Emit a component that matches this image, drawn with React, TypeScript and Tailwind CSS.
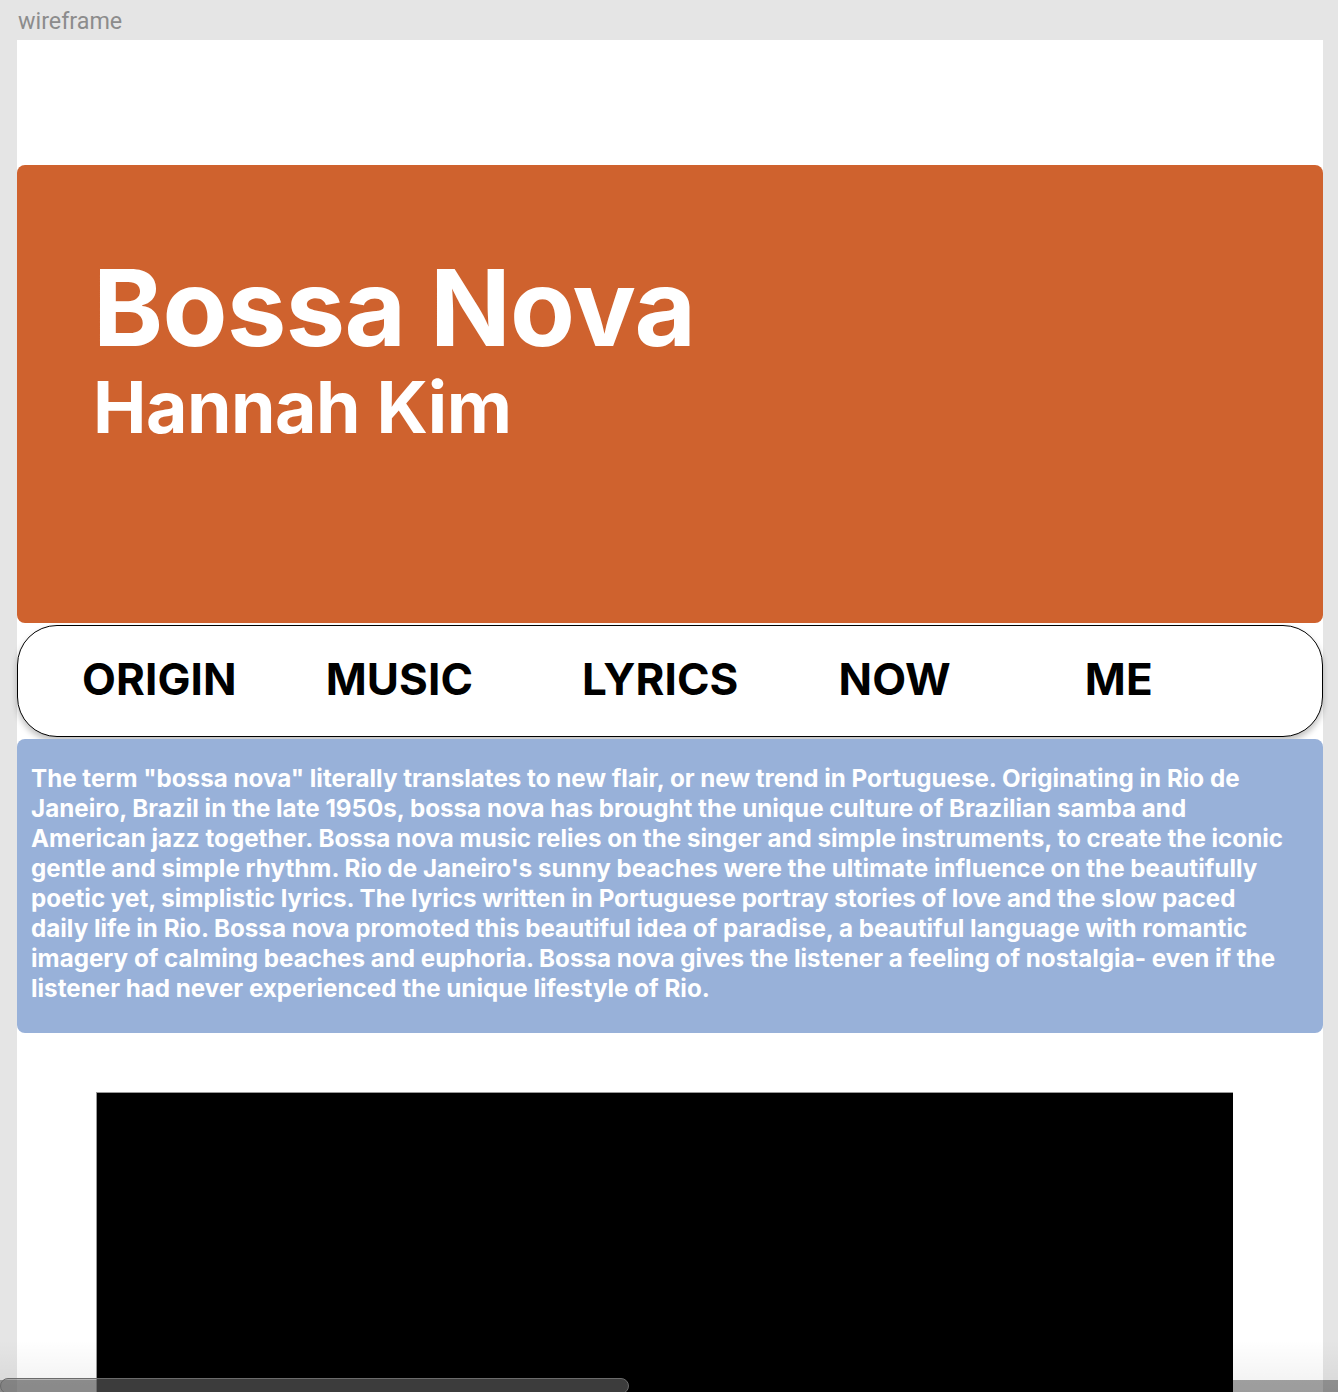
const NAV_ITEMS = [
  { label: "ORIGIN", cls: "ml-[64px]" },
  { label: "MUSIC", cls: "ml-[89px]" },
  { label: "LYRICS", cls: "ml-[109px]" },
  { label: "NOW", cls: "ml-[100px]" },
  { label: "ME", cls: "ml-[134px]" },
];

const ABOUT_LINES = [
  'The term "bossa nova" literally translates to new flair, or new trend in Portuguese. Originating in Rio de',
  "Janeiro, Brazil in the late 1950s, bossa nova has brought the unique culture of Brazilian samba and",
  "American jazz together. Bossa nova music relies on the singer and simple instruments, to create the iconic",
  "gentle and simple rhythm. Rio de Janeiro's sunny beaches were the ultimate influence on the beautifully",
  "poetic yet, simplistic lyrics. The lyrics written in Portuguese portray stories of love and the slow paced",
  "daily life in Rio. Bossa nova promoted this beautiful idea of paradise, a beautiful language with romantic",
  "imagery of calming beaches and euphoria. Bossa nova gives the listener a feeling of nostalgia- even if the",
  "listener had never experienced the unique lifestyle of Rio.",
];

export default function App() {
  return (
    <div className="min-h-screen bg-[#e5e5e5] font-['Inter',sans-serif] relative overflow-hidden">
      {/* Frame label */}
      <div className="pl-[18px] pt-[6px] h-[40px] text-[23.3px] leading-[30px] text-[#8c8c8c] font-['Roboto',sans-serif]">
        wireframe
      </div>

      {/* Frame */}
      <div className="ml-[17px] w-[1306px] bg-white pt-[125px] pb-[40px]">
        {/* Hero */}
        <header className="h-[458px] bg-[#cf622e] rounded-[8px] pl-[76px] pt-[88px] text-white">
          <h1 className="text-[106px] leading-[110px] font-bold tracking-[-0.6px]">Bossa Nova</h1>
          <h2 className="text-[71.5px] leading-[80px] font-bold mt-[4px] tracking-[-0.5px]">Hannah Kim</h2>
        </header>

        {/* Nav */}
        <nav className="mt-[2px] h-[112px] pb-[4px] border border-black rounded-[40px] shadow-[0_4px_6px_rgba(0,0,0,0.25)] flex items-center bg-white">
          {NAV_ITEMS.map((item) => (
            <a
              key={item.label}
              href="#"
              className={`${item.cls} text-[44px] font-bold text-black leading-none tracking-[0.1px]`}
            >
              {item.label}
            </a>
          ))}
        </nav>

        {/* About */}
        <section className="mt-[2px] bg-[#98b1d9] rounded-[8px] px-[14px] pt-[25px] pb-[29px]">
          <p className="text-white text-[24.2px] leading-[30px] font-bold whitespace-nowrap">
            {ABOUT_LINES.map((line) => (
              <span key={line} className="block">
                {line}
              </span>
            ))}
          </p>
        </section>

        {/* Video */}
        <div className="mt-[59px] ml-[79px] w-[1137px] h-[420px] bg-black border-t border-l border-[#9a9a9a]" />
      </div>

      {/* Bottom fade + scrollbar overlay */}
      <div className="absolute left-0 right-0 top-[1340px] h-[52px] bg-gradient-to-b from-transparent to-[rgba(0,0,0,0.06)] pointer-events-none" />
      <div className="absolute left-0 right-0 top-[1380px] h-[12px] bg-[rgba(0,0,0,0.35)] pointer-events-none" />
      <div className="absolute left-0 w-[629px] top-[1378px] h-[16px] rounded-[8px] border border-[#6b6b6b] bg-[rgba(120,120,120,0.5)] pointer-events-none" />
    </div>
  );
}
